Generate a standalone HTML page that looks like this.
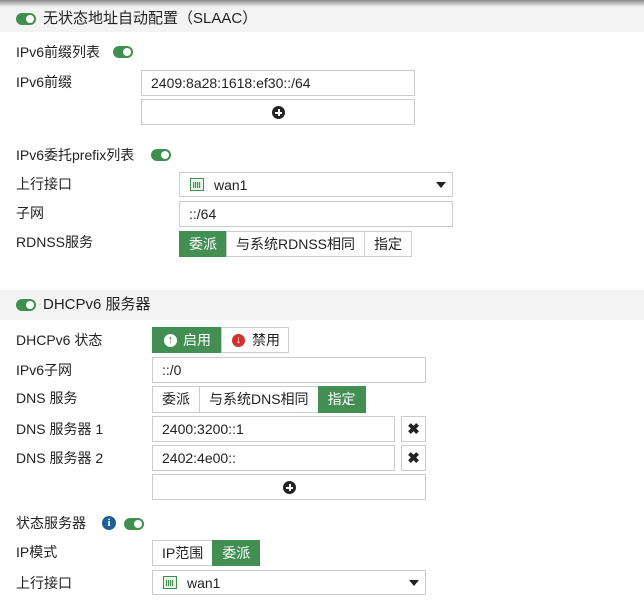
<!DOCTYPE html><html><head><meta charset="utf-8"><style>
*{box-sizing:border-box;margin:0;padding:0}
body{width:644px;height:605px;background:#fff;font-family:"Liberation Sans","Noto Sans CJK SC",sans-serif;font-size:14px;color:#222;position:relative;overflow:hidden}
.a{position:absolute}
.hdr{position:absolute;left:0;width:644px;background:#f3f3f3;font-size:15px;padding-left:43px}
.tg{position:absolute;width:20px;height:12px;border-radius:6px;background:#3f8f4f}
.tg:after{content:"";position:absolute;right:2px;top:2px;width:8px;height:8px;border-radius:50%;background:#fff}
.lb{position:absolute;left:16px;line-height:16px}
.in{position:absolute;border:1px solid #ccc;background:#fff;padding-left:9px;line-height:24px;font-size:14px}
.bg{position:absolute;display:flex;height:26px}
.bg span{border:1px solid #ccc;line-height:24px;padding:0 9px;margin-left:-1px;background:#fff}
.bg span:first-child{margin-left:0}
.bg .g{background:#438e53;border-color:#438e53;color:#fff}
.plus{position:absolute;width:13px;height:13px;border-radius:50%;background:#222}
.plus:before{content:"";position:absolute;left:3px;top:5.5px;width:7px;height:2px;background:#fff}
.plus:after{content:"";position:absolute;left:5.5px;top:3px;width:2px;height:7px;background:#fff}
.ic{position:absolute;width:14px;height:13px;border:1px solid #3f8f4f;background:#e8f3ea}
.ic:after{content:"";position:absolute;left:2px;top:3px;width:8px;height:6px;background:repeating-linear-gradient(90deg,#3f8f4f 0 1px,#cfe6d4 1px 2px)}
.car{position:absolute;width:0;height:0;border-left:5px solid transparent;border-right:5px solid transparent;border-top:6px solid #222}
.x{position:absolute;width:25px;height:26px;border:1px solid #ccc;text-align:center;font-weight:bold;font-size:15px;line-height:25px}
</style></head><body>
<div class="a" style="left:0;top:0;width:644px;height:7px;background:linear-gradient(#8a8a8a,#f3f3f3);z-index:2"></div>
<div class="hdr" style="top:0;height:32px;line-height:38px">无状态地址自动配置（SLAAC）</div>
<div class="tg" style="left:16px;top:13px"></div>

<div class="lb" style="top:44px">IPv6前缀列表</div><div class="tg" style="left:113px;top:46px"></div>
<div class="lb" style="top:74px">IPv6前缀</div>
<div class="in" style="left:141px;top:70px;width:274px;height:26px">2409:8a28:1618:ef30::/64</div>
<div class="in" style="left:141px;top:99px;width:274px;height:26px"></div><div class="plus" style="left:272px;top:106px"></div>

<div class="lb" style="top:147px">IPv6委托prefix列表</div><div class="tg" style="left:151px;top:149px"></div>
<div class="lb" style="top:176px">上行接口</div>
<div class="in" style="left:179px;top:172px;width:274px;height:25px;padding-left:34px">wan1</div><div class="ic" style="left:190px;top:178px"></div><div class="car" style="left:436px;top:182px"></div>
<div class="lb" style="top:205px">子网</div>
<div class="in" style="left:179px;top:201px;width:274px;height:26px">::/64</div>
<div class="lb" style="top:234px">RDNSS服务</div>
<div class="bg" style="left:179px;top:231px"><span class="g">委派</span><span>与系统RDNSS相同</span><span>指定</span></div>

<div class="hdr" style="top:290px;height:30px;line-height:30px">DHCPv6 服务器</div>
<div class="tg" style="left:16px;top:299px"></div>
<div class="lb" style="top:332px">DHCPv6 状态</div>
<div class="bg" style="left:152px;top:327px"><span class="g" style="padding:0 10px 0 30px;position:relative">启用<i style="position:absolute;left:11px;top:6px;width:13px;height:13px;border-radius:50%;background:#fff;color:#438e53;font-style:normal;font-size:11px;line-height:13px;text-align:center;font-weight:bold">↑</i></span><span style="padding:0 8px 0 30px;position:relative">禁用<i style="position:absolute;left:10px;top:6px;width:13px;height:13px;border-radius:50%;background:#d32f2f;color:#fff;font-style:normal;font-size:11px;line-height:13px;text-align:center;font-weight:bold">↓</i></span></div>
<div class="lb" style="top:362px">IPv6子网</div>
<div class="in" style="left:152px;top:357px;width:274px;height:26px">::/0</div>
<div class="lb" style="top:390px">DNS 服务</div>
<div class="bg" style="left:152px;top:386px;height:27px"><span>委派</span><span>与系统DNS相同</span><span class="g">指定</span></div>
<div class="lb" style="top:421px">DNS 服务器 1</div>
<div class="in" style="left:152px;top:416px;width:243px;height:26px">2400:3200::1</div>
<div class="x" style="left:401px;top:416px">✖</div>
<div class="lb" style="top:450px">DNS 服务器 2</div>
<div class="in" style="left:152px;top:445px;width:243px;height:26px">2402:4e00::</div>
<div class="x" style="left:401px;top:445px">✖</div>
<div class="in" style="left:152px;top:474px;width:274px;height:26px"></div><div class="plus" style="left:283px;top:481px"></div>

<div class="lb" style="top:515px">状态服务器</div>
<div class="a" style="left:102px;top:516px;width:14px;height:14px;border-radius:50%;background:#1f5f99;color:#fff;font-size:11px;font-weight:bold;line-height:14px;text-align:center;font-family:'Liberation Serif',serif">i</div>
<div class="tg" style="left:124px;top:518px"></div>
<div class="lb" style="top:544px">IP模式</div>
<div class="bg" style="left:152px;top:540px"><span>IP范围</span><span class="g">委派</span></div>
<div class="lb" style="top:575px">上行接口</div>
<div class="in" style="left:152px;top:570px;width:274px;height:25px;padding-left:34px">wan1</div><div class="ic" style="left:163px;top:576px"></div><div class="car" style="left:409px;top:580px"></div>
</body></html>
